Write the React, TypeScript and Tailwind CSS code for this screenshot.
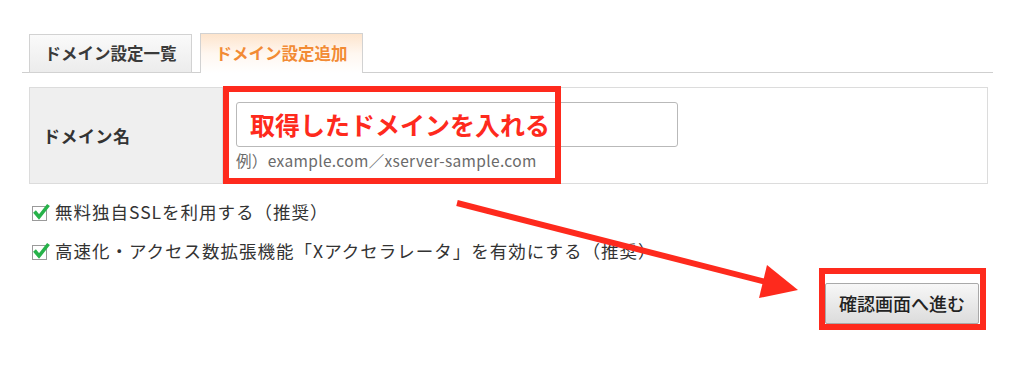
import React from "react";

const jp = "font-['Noto_Sans_CJK_JP','Noto_Sans',sans-serif]";

function CheckIcon() {
  return (
    <svg width="20" height="20" viewBox="0 0 20 20" className="shrink-0">
      <rect x="1.5" y="4.5" width="14" height="14" fill="#fff" stroke="#9a9a9a" strokeWidth="1" />
      <polyline points="3.5,9.5 8,15 17.5,3" fill="none" stroke="#27b24a" strokeWidth="3.6" strokeLinejoin="miter" />
    </svg>
  );
}

function Option({ label }: { label: string }) {
  return (
    <div className="flex items-center gap-[4px] h-[20px]">
      <CheckIcon />
      <span className="text-[17.5px] leading-[20px] tracking-[1px] text-[#333]">{label}</span>
    </div>
  );
}

export default function App() {
  return (
    <div className={`relative w-[1024px] h-[378px] bg-white overflow-hidden ${jp}`}>
      {/* tabs */}
      <div className="pt-[33px] pl-[22px] w-[993px]">
        <div className="flex items-end gap-[8px] pl-[7px] border-b border-[#cfcfcf]">
          <div className="w-[163px] h-[39px] -mb-px flex items-center justify-center border border-[#d2d2d2] bg-gradient-to-b from-[#fafafa] to-[#ececec] text-[16.5px] font-bold text-[#3a3a3a]">
            ドメイン設定一覧
          </div>
          <div className="w-[163px] h-[40px] -mb-px flex items-center justify-center border border-b-0 border-[#d2d2d2] bg-gradient-to-b from-[#fde4cc] via-[#fff7f0] to-white text-[16.5px] font-bold text-[#f28b35]">
            ドメイン設定追加
          </div>
        </div>
      </div>

      {/* form table */}
      <div className="ml-[29px] mt-[14px] w-[959px] h-[97px] flex border border-[#dcdcdc]">
        <div className="w-[193px] bg-[#efefef] border-r border-[#dcdcdc] flex items-center pl-[13px] text-[17px] tracking-[0.5px] font-bold text-[#333]">
          ドメイン名
        </div>
        <div className="flex-1 pl-[13px] pt-[14px]">
          <div className="w-[442px] h-[45px] border border-[#b9b9b9] rounded-[3px] bg-white flex items-center pl-[13px] text-[25px] font-bold text-[#fe2a1d] leading-none">
            取得したドメインを入れる
          </div>
          <div className="mt-[3px] text-[15.5px] leading-[20px] tracking-[0.35px] text-[#6a6a6a]">
            例）example.com／xserver-sample.com
          </div>
        </div>
      </div>

      {/* options */}
      <div className="ml-[31px] mt-[18px] flex flex-col gap-[19px]">
        <Option label="無料独自SSLを利用する（推奨）" />
        <Option label="高速化・アクセス数拡張機能「Xアクセラレータ」を有効にする（推奨）" />
      </div>

      {/* submit */}
      <div className="flex justify-end pr-[38px] mt-[7px]">
        <div className="border-[6px] border-[#fe2a1d] pt-[9px] pr-[1px]">
          <button className="w-[154px] h-[41px] rounded-[2px] border border-[#a9a9a9] bg-gradient-to-b from-[#f7f7f7] to-[#dcdcdc] text-[18px] font-medium text-[#222] flex items-center justify-center">
            確認画面へ進む
          </button>
        </div>
      </div>

      {/* annotations */}
      <div className="absolute left-[223px] top-[86px] w-[338px] h-[98px] border-[6px] border-[#fe2a1d] pointer-events-none" />
      <svg className="absolute left-0 top-0 pointer-events-none" width="1024" height="378">
        <line x1="457" y1="203" x2="766" y2="282" stroke="#fe2a1d" strokeWidth="6" />
        <polygon points="798,290 767,265 759,298" fill="#fe2a1d" />
      </svg>
    </div>
  );
}
